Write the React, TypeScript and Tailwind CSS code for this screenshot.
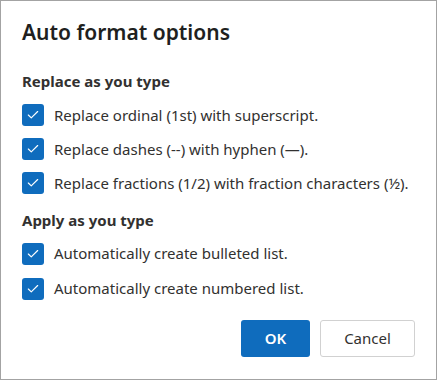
import { Check } from "lucide-react";

const replaceItems = [
  "Replace ordinal (1st) with superscript.",
  "Replace dashes (--) with hyphen (\u2014).",
  "Replace fractions (1/2) with fraction characters (\u00bd).",
];

const applyItems = [
  "Automatically create bulleted list.",
  "Automatically create numbered list.",
];

function CheckRow({ label, tall }: { label: string; tall?: boolean }) {
  return (
    <label className={`flex items-center gap-[10px] ${tall ? "h-[35px]" : "h-[34px]"}`}>
      <span className="flex items-center justify-center w-[22px] h-[22px] rounded-[3px] bg-[#0f6cbd]">
        <Check className="w-[14px] h-[14px] text-white" strokeWidth={2} />
      </span>
      <span className="text-[15px] text-[#323130]">{label}</span>
    </label>
  );
}

export default function App() {
  return (
    <div
      className="w-[437px] h-[380px] bg-white border border-[#a3a3a3] px-[21px] pt-[16px] flex flex-col"
      style={{ fontFamily: '"Segoe UI", "Noto Sans", sans-serif' }}
    >
      {/* Title */}
      <h1 className="text-[21px] font-semibold text-[#201f1e] leading-[30px]">Auto format options</h1>

      {/* Replace section */}
      <h2 className="mt-[24px] text-[15px] font-bold text-[#323130] leading-[20px]">Replace as you type</h2>
      <div className="mt-[7px] flex flex-col">
        {replaceItems.map((item) => (
          <CheckRow key={item} label={item} />
        ))}
      </div>

      {/* Apply section */}
      <h2 className="mt-[10px] text-[15px] font-bold text-[#323130] leading-[20px]">Apply as you type</h2>
      <div className="mt-[6px] flex flex-col">
        {applyItems.map((item) => (
          <CheckRow key={item} label={item} tall />
        ))}
      </div>

      {/* Buttons */}
      <div className="mt-auto mb-[22px] flex justify-end gap-[10px]">
        <button className="w-[69px] h-[37px] rounded-[3px] bg-[#0f6cbd] text-white text-[15px] font-semibold">OK</button>
        <button className="w-[95px] h-[37px] rounded-[3px] border border-[#d1d1d1] bg-white text-[#323130] text-[15px]">
          Cancel
        </button>
      </div>
    </div>
  );
}
